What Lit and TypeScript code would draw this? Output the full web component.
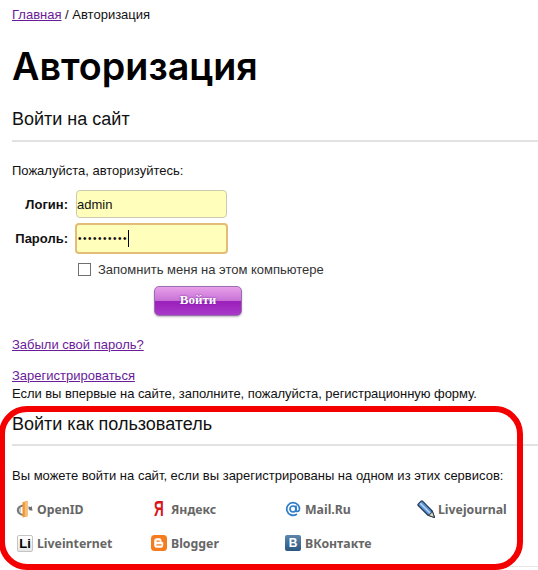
import { LitElement, html, css, svg } from "lit";
import { customElement } from "lit/decorators.js";

const openid = svg`<svg width="18" height="18" viewBox="0 0 18 18"><path d="M7 4.500C3.500 5 .8 7.200.8 10.200c0 3 2.700 5 6.200 5.600v-1.800c-2.200-.5-3.800-1.900-3.800-3.800S4.800 6.900 7 6.400z" fill="#7c7c7c"/><path d="M5 7.500c-1 .6-1.300 1.500-1.300 2.700S4 12.400 5 13z" fill="#c9c9c9"/><path d="M6.500 2.300 11.500.8v15.400l-5 1.300z" fill="#f0972f"/><path d="M8.800 2v14.800l2.700-.7V.9z" fill="#f8bd77"/><path d="M12.500 6.500c.9.100 1.500.3 2.100.6l1.200-.8.700 4.400-4-.7 1-.7c-.3-.2-.6-.3-1-.4z" fill="#707070"/></svg>`;
const blogger = svg`<svg width="16" height="16" viewBox="0 0 16 16"><rect width="16" height="16" rx="3.500" fill="#f57d20"/><path d="M5.800 3.200h2.600c1.200 0 2 .8 2 2v1c0 .5.400.7.900.7.500 0 .9.400.9.900v2.400c0 1.700-1.300 2.600-2.700 2.600H5.800c-1.500 0-2.600-1.100-2.600-2.600V5.800c0-1.500 1.100-2.600 2.600-2.600z" fill="#fff"/><path d="M6 6.100h2.200M6 9.900h4" stroke="#f57d20" stroke-width="1.400" stroke-linecap="round"/></svg>`;
const pencil = svg`<svg width="19" height="19" viewBox="0 0 19 19"><path d="M4.200 1.200 1.200 4.200c-.4.400-.4.900 0 1.300l9.800 9.700 6.500 2.300-2.300-6.500L5.500 1.200c-.4-.4-.9-.4-1.300 0z" fill="#5b93d4" stroke="#1d3552" stroke-width="1.200" stroke-linejoin="round"/><path d="M3.200 3.200 13 13" stroke="#b9d6f3" stroke-width="1.500"/><path d="m11 15.200 6.500 2.300-2.300-6.500c-.4 2-1.900 3.700-4.200 4.200z" fill="#f1dcae" stroke="#1d3552" stroke-width=".9" stroke-linejoin="round"/></svg>`;
const mail = svg`<svg width="16" height="16" viewBox="0 0 16 16" fill="none" stroke="#2f7cc8"><circle cx="8" cy="8" r="3" stroke-width="1.700"/><path d="M11 5v4.300c0 1.600 2.800 1.600 3.300-.3.800-3.600-2-7.300-6.300-7.300a6.300 6.300 0 1 0 3.300 11.700" stroke-width="1.700" stroke-linecap="round"/></svg>`;

@customElement("app-root")
export class AppRoot extends LitElement {
  static styles = css`
    :host {
      display: block;
      position: relative;
      height: 570px;
      overflow: hidden;
      background: #fff;
      color: #111;
      font: 13px/15px "Liberation Sans", Arial, sans-serif;
    }
    a { color: #6a1b9a; text-decoration: underline; }
    .crumbs { padding: 7px 0 0 12px; }
    h1 {
      margin: 21px 0 0 12px;
      font: 600 37.700px/46px Inter, sans-serif;
      color: #000;
    }
    h2 {
      margin: 0 0 0 12px;
      font: 400 18px/22px "Liberation Sans", Arial, sans-serif;
      color: #111;
    }
    .h-first { margin-top: 19px; }
    hr {
      height: 2px;
      border: 0;
      margin: 0 0 0 12px;
      background: #e2e2e2;
    }
    .hr-first { margin-top: 10px; }
    .please { margin: 21px 0 0 12px; }
    .row { display: flex; align-items: center; }
    .label {
      width: 68px;
      text-align: right;
      font-weight: 700;
      font-size: 13px;
    }
    .field {
      box-sizing: border-box;
      background: #ffffbb;
      border-radius: 4px;
      display: flex;
      align-items: center;
    }
    .login { margin-top: 12px; }
    .login .field {
      width: 151px;
      height: 28px;
      margin-left: 8px;
      border: 1px solid #cbcbb0;
    }
    .pass { margin-top: 5px; }
    .pass .field {
      width: 153px;
      height: 31px;
      margin-left: 7px;
      padding-left: 1px;
      border: 2px solid #e3bd78;
    }
    .dots { font-size: 10px; letter-spacing: 1.500px; }
    .caret { width: 1px; height: 17px; background: #000; }
    .remember {
      display: flex;
      align-items: center;
      margin: 8px 0 0 78px;
      color: #333;
    }
    .remember input {
      appearance: none;
      width: 13px;
      height: 13px;
      margin: 0 7px 0 0;
      border: 1px solid #707070;
      background: #fff;
    }
    .submit {
      display: block;
      box-sizing: border-box;
      width: 88px;
      height: 30px;
      margin: 9px 0 0 154px;
      padding: 0 0 2px;
      border: 1px solid #9a6fb0;
      border-radius: 5px;
      background: linear-gradient(#e89fe8 0%, #c873d8 48%, #9c1fbc 52%, #a83ac8 100%);
      box-shadow: 0 1px 2px #bbb;
      color: #fff;
      font: 700 13px "Liberation Serif", serif;
      text-shadow: 0 0 2px #6a1590;
    }
    .forgot { margin: 21px 0 0 12px; }
    .reg { margin: 16px 0 0 12px; }
    .info { margin: 3px 0 0 12px; letter-spacing: -0.050px; }
    .h-second { margin-top: 12px; }
    .hr-second { margin-top: 9px; }
    .services-note { margin: 22px 0 0 12px; }
    .services {
      display: grid;
      grid-template-columns: 134px 134px 133px 100px;
      grid-auto-rows: 34px;
      margin: 9px 0 0 17px;
      align-items: center;
    }
    .svc {
      display: flex;
      align-items: center;
      gap: 4px;
      color: #666;
      font: 700 12.300px "Noto Sans", sans-serif;
      white-space: nowrap;
    }
    .ico {
      width: 16px;
      height: 16px;
      flex: none;
      display: flex;
      align-items: center;
      justify-content: center;
    }
    .ico svg { flex: none; }
    .ya {
      color: #d8161c;
      font: 700 22px "Liberation Sans", sans-serif;
      transform: scaleX(0.620);
    }
    .li {
      box-sizing: border-box;
      height: 17px;
      background: linear-gradient(#fff, #e8e8e8);
      border: 1px solid #c4c4c4;
      border-radius: 2px;
      color: #000;
      font: 700 13px "Liberation Sans", sans-serif;
    }
    .vk {
      background: linear-gradient(#5d86ad, #2b587f);
      border-radius: 2px;
      color: #fff;
      font: 700 12px "Liberation Sans", sans-serif;
    }
    .hr-last { margin-top: 6px; height: 1px; background: #e6e6e6; }
    .frame {
      position: absolute;
      left: -1px;
      top: 406px;
      width: 524px;
      height: 164px;
      box-sizing: border-box;
      border: 6.500px solid #f40000;
      border-radius: 28px;
      pointer-events: none;
    }
  `;

  render() {
    return html`
      <div class="crumbs"><a href="#">Главная</a> / Авторизация</div>
      <h1>Авторизация</h1>
      <h2 class="h-first">Войти на сайт</h2>
      <hr class="hr-first" />
      <div class="please">Пожалуйста, авторизуйтесь:</div>
      <div class="row login"><span class="label">Логин:</span><div class="field">admin</div></div>
      <div class="row pass">
        <span class="label">Пароль:</span>
        <div class="field"><span class="dots">••••••••••</span><span class="caret"></span></div>
      </div>
      <label class="remember"><input type="checkbox" />Запомнить меня на этом компьютере</label>
      <button class="submit">Войти</button>
      <div class="forgot"><a href="#">Забыли свой пароль?</a></div>
      <div class="reg"><a href="#">Зарегистрироваться</a></div>
      <div class="info">Если вы впервые на сайте, заполните, пожалуйста, регистрационную форму.</div>
      <h2 class="h-second">Войти как пользователь</h2>
      <hr class="hr-second" />
      <div class="services-note">Вы можете войти на сайт, если вы зарегистрированы на одном из этих сервисов:</div>
      <div class="services">
        <div class="svc"><span class="ico">${openid}</span>OpenID</div>
        <div class="svc"><span class="ico ya">Я</span>Яндекс</div>
        <div class="svc"><span class="ico">${mail}</span>Mail.Ru</div>
        <div class="svc"><span class="ico">${pencil}</span>Livejournal</div>
        <div class="svc"><span class="ico li">Li</span>Liveinternet</div>
        <div class="svc"><span class="ico">${blogger}</span>Blogger</div>
        <div class="svc"><span class="ico vk">В</span>ВКонтакте</div>
      </div>
      <hr class="hr-last" />
      <div class="frame"></div>
    `;
  }
}
